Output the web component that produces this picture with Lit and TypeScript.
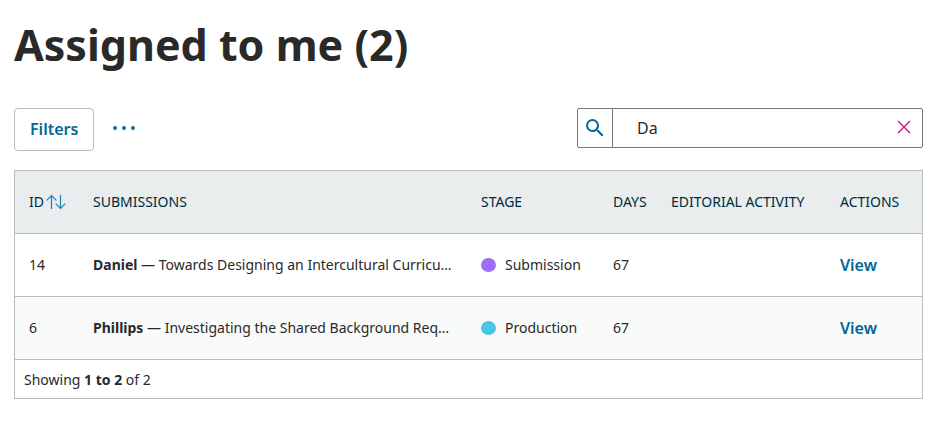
import { LitElement, html, css } from "lit";
import { customElement, property, state } from "lit/decorators.js";
import { classMap } from "lit/directives/class-map.js";

interface Submission {
  id: number;
  author: string;
  title: string;
  stage: "Submission" | "Production";
  days: number;
}

const submissions: Submission[] = [
  {
    id: 14,
    author: "Daniel",
    title: "Towards Designing an Intercultural Curricu…",
    stage: "Submission",
    days: 67,
  },
  {
    id: 6,
    author: "Phillips",
    title: "Investigating the Shared Background Req…",
    stage: "Production",
    days: 67,
  },
];

@customElement("search-field")
class SearchField extends LitElement {
  @property() value = "";

  static styles = css`
    :host {
      display: block;
    }
    .field {
      display: flex;
      box-sizing: border-box;
      height: 40px;
      border: 1px solid #777;
      border-radius: 2px;
      background: #fff;
    }
    .label {
      display: flex;
      flex: none;
      align-items: center;
      justify-content: center;
      width: 34px;
      border-right: 1px solid #777;
      color: #006798;
    }
    .input {
      flex: 1;
      min-width: 0;
      padding: 0 0 0 24px;
      border: 0;
      outline: 0;
      background: none;
      color: #292929;
      font: 16px/24px "Noto Sans", sans-serif;
    }
    .clear {
      display: flex;
      flex: none;
      align-items: center;
      justify-content: center;
      width: 36px;
      padding: 0 0 2px;
      border: 0;
      background: none;
      color: #d00a6c;
      cursor: pointer;
    }
    svg {
      display: block;
    }
  `;

  render() {
    return html`
      <div class="field">
        <label class="label" for="query" aria-label="Search submissions">
          <svg width="24" height="24" viewBox="0 0 24 24" fill="currentColor" aria-hidden="true">
            <path
              d="M15.5 14h-.79l-.28-.27A6.47 6.47 0 0 0 16 9.5 6.5 6.5 0 1 0 9.5 16c1.61 0 3.09-.59 4.23-1.57l.27.28v.79l5 4.99L20.49 19l-4.99-5zm-6 0C7.01 14 5 11.99 5 9.5S7.01 5 9.5 5 14 7.01 14 9.5 11.99 14 9.5 14z"
            />
          </svg>
        </label>
        <input
          id="query"
          class="input"
          type="text"
          .value=${this.value}
          @input=${(e: Event) => (this.value = (e.target as HTMLInputElement).value)}
        />
        <button class="clear" type="button" aria-label="Clear search" @click=${() => (this.value = "")}>
          <svg width="14" height="14" viewBox="0 0 14 14" fill="none" stroke="currentColor" stroke-width="1.2" aria-hidden="true">
            <path d="M1 1l12 12M13 1L1 13" />
          </svg>
        </button>
      </div>
    `;
  }
}

@customElement("submission-table")
class SubmissionTable extends LitElement {
  @property({ attribute: false }) rows: Submission[] = [];

  static styles = css`
    :host {
      display: block;
      border: 1px solid #bbb;
      color: #292929;
      font-size: 14px;
      line-height: 20px;
    }
    .table {
      width: 100%;
      table-layout: fixed;
      border-collapse: collapse;
    }
    .head,
    .cell {
      height: 62px;
      padding: 0 0 0 14px;
      border-bottom: 1px solid #bbb;
      text-align: left;
      vertical-align: middle;
      white-space: nowrap;
    }
    .head {
      background: #e9eded;
      color: #002c40;
      font-weight: 400;
      text-transform: uppercase;
    }
    .row:nth-child(even) {
      background: #f9fbfa;
    }
    .id {
      width: 50px;
    }
    .stage {
      width: 118px;
    }
    .days {
      width: 44px;
    }
    .activity {
      width: 155px;
    }
    .actions {
      width: 82px;
    }
    .title {
      padding-right: 4px;
      overflow: hidden;
      text-overflow: ellipsis;
    }
    .sort {
      display: inline-flex;
      align-items: center;
      gap: 2px;
      padding: 0;
      border: 0;
      background: none;
      color: inherit;
      font: inherit;
      text-transform: inherit;
      cursor: pointer;
    }
    .arrows {
      color: #1e7fb0;
    }
    .status {
      display: flex;
      align-items: center;
      gap: 9px;
    }
    .dot {
      width: 15px;
      height: 14px;
      border-radius: 50%;
    }
    .submission {
      background: #9b6ff8;
    }
    .production {
      background: #49c6e1;
    }
    .view {
      color: #006798;
      font-size: 16px;
      font-weight: 600;
      text-decoration: none;
    }
    .footer {
      padding: 10px 9px 8px;
    }
  `;

  render() {
    const count = this.rows.length;
    return html`
      <table class="table">
        <thead>
          <tr>
            <th class="head id" scope="col">
              <button class="sort" type="button">
                ID
                <svg class="arrows" width="20" height="16" viewBox="0 0 20 16" fill="none" stroke="currentColor" stroke-width="1.2" aria-hidden="true">
                  <path d="M5.5 15V1.5M.7 6.3l4.8-4.8 4.8 4.8M14.5 1v13.5M9.7 9.7l4.8 4.8 4.8-4.8" />
                </svg>
              </button>
            </th>
            <th class="head" scope="col">Submissions</th>
            <th class="head stage" scope="col">Stage</th>
            <th class="head days" scope="col">Days</th>
            <th class="head activity" scope="col">Editorial Activity</th>
            <th class="head actions" scope="col">Actions</th>
          </tr>
        </thead>
        <tbody>
          ${this.rows.map(
            (row) => html`
              <tr class="row">
                <td class="cell">${row.id}</td>
                <td class="cell title"><b>${row.author}</b> — ${row.title}</td>
                <td class="cell">
                  <span class="status">
                    <span
                      class=${classMap({
                        dot: true,
                        submission: row.stage === "Submission",
                        production: row.stage === "Production",
                      })}
                    ></span>
                    ${row.stage}
                  </span>
                </td>
                <td class="cell">${row.days}</td>
                <td class="cell"></td>
                <td class="cell"><a class="view" href="#submission-${row.id}">View</a></td>
              </tr>
            `
          )}
        </tbody>
      </table>
      <div class="footer">Showing <b>1 to ${count}</b> of ${count}</div>
    `;
  }
}

@customElement("app-root")
class AppRoot extends LitElement {
  @state() private rows = submissions;

  static styles = css`
    :host {
      display: block;
      padding: 14px;
      background: #fff;
      color: #292929;
      font-family: "Noto Sans", sans-serif;
    }
    .heading {
      margin: 0 0 32px;
      font-size: 43px;
      font-weight: 700;
      line-height: 62px;
    }
    .toolbar {
      display: flex;
      align-items: flex-start;
      gap: 15px;
      margin-bottom: 19px;
    }
    .filters {
      height: 43px;
      padding: 0 15px 2px;
      border: 1px solid #bbb;
      border-radius: 4px;
      background: #fff;
      color: #006798;
      font: 600 16px/24px "Noto Sans", sans-serif;
      cursor: pointer;
    }
    .more {
      display: flex;
      align-items: center;
      justify-content: center;
      width: 30px;
      height: 39px;
      padding: 0;
      border: 0;
      background: none;
      color: #006798;
      cursor: pointer;
    }
    .search {
      flex: 0 1 346px;
      margin-left: auto;
    }
  `;

  render() {
    return html`
      <h1 class="heading">Assigned to me (${this.rows.length})</h1>
      <div class="toolbar">
        <button class="filters" type="button">Filters</button>
        <button class="more" type="button" aria-label="More actions">
          <svg width="22" height="4" viewBox="0 0 22 4" fill="currentColor" aria-hidden="true">
            <circle cx="2" cy="2" r="1.9" />
            <circle cx="11" cy="2" r="1.9" />
            <circle cx="20" cy="2" r="1.9" />
          </svg>
        </button>
        <search-field class="search" value="Da"></search-field>
      </div>
      <submission-table .rows=${this.rows}></submission-table>
    `;
  }
}
